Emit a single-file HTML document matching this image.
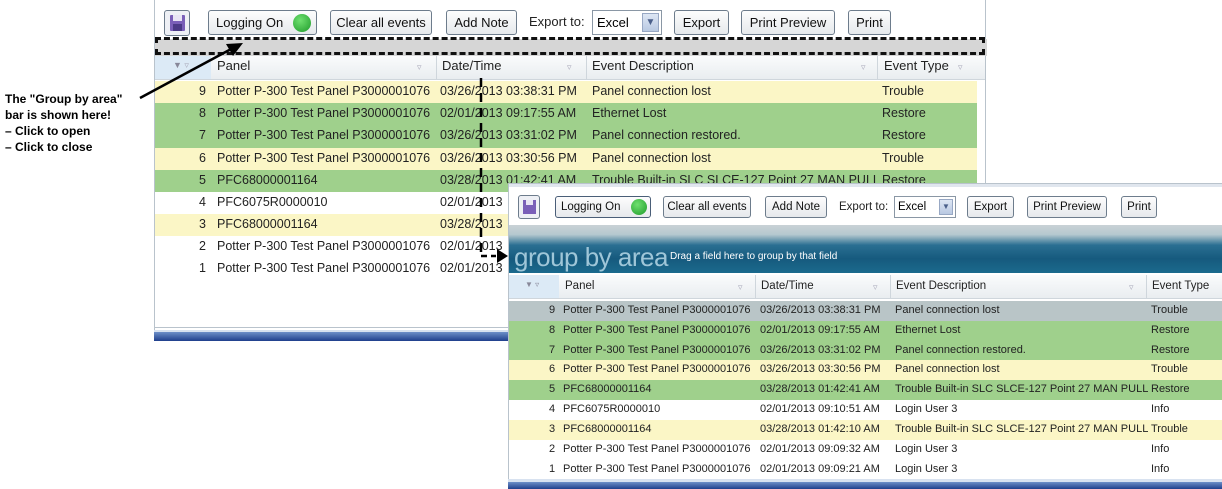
<!DOCTYPE html>
<html><head><style>
*{margin:0;padding:0;box-sizing:border-box}
body{width:1222px;height:489px;background:#fff;position:relative;overflow:hidden;font-family:"Liberation Sans",sans-serif}
.abs{position:absolute}
.win{position:absolute;background:#fff;border:1px solid #b9c3cc}
.btn{position:absolute;border:1px solid #6d7c8c;border-radius:3px;background:linear-gradient(#fdfdfd,#e6e9ec);font-size:12px;color:#111;text-align:center;white-space:nowrap}
.row{position:absolute;left:0;right:0;white-space:nowrap;color:#222}
.row span{position:absolute}
.hdr{position:absolute;left:0;right:0;background:linear-gradient(#fafbfc,#e9edf0);border-bottom:1px solid #cfd6dc;color:#222}
.hdr span{position:absolute}
.y{background:#fbf6c6}.g{background:#9fd08c}.w{background:#fff}
.fil{color:#aab;font-size:9px}
</style></head><body>

<!-- TOP WINDOW -->
<div class="win" style="left:154px;top:-2px;width:832px;height:336px;border-bottom:none">
  <div class="abs" style="left:9px;top:11px;width:26px;height:26px;border:1px solid #6d7c8c;border-radius:3px;background:#eef0f5">
    <div class="abs" style="left:5px;top:4px;width:15px;height:16px;background:#7a5fb8;border-radius:1px"></div>
    <div class="abs" style="left:8px;top:4px;width:9px;height:6px;background:#e8e4f4"></div>
    <div class="abs" style="left:8px;top:13px;width:9px;height:7px;background:#4b3a86"></div>
  </div>
  <div class="btn" style="left:53px;top:11px;width:109px;height:25px;line-height:23px;text-align:left;padding-left:7px;font-size:13px">Logging On
    <div class="abs" style="left:84px;top:3px;width:18px;height:18px;border-radius:50%;background:radial-gradient(circle at 40% 35%,#6fe06f,#1e9a2a)"></div></div>
  <div class="btn" style="left:175px;top:11px;width:102px;height:25px;line-height:23px;font-size:13px">Clear all events</div>
  <div class="btn" style="left:291px;top:11px;width:71px;height:25px;line-height:23px;font-size:13px">Add Note</div>
  <div class="abs" style="left:374px;top:15px;font-size:13px;color:#222">Export to:</div>
  <div class="abs" style="left:437px;top:11px;width:70px;height:25px;border:1px solid #8a97a5;background:#fff;font-size:13px;line-height:23px;padding-left:4px">Excel
    <div class="abs" style="right:2px;top:2px;width:17px;height:19px;background:linear-gradient(#dde6f4,#b9c9e2);border:1px solid #98a8c4;color:#4a5f8a;font-size:10px;line-height:17px;text-align:center">&#9660;</div></div>
  <div class="btn" style="left:519px;top:11px;width:55px;height:25px;line-height:23px;font-size:13px">Export</div>
  <div class="btn" style="left:586px;top:11px;width:94px;height:25px;line-height:23px;font-size:13px">Print Preview</div>
  <div class="btn" style="left:693px;top:11px;width:43px;height:25px;line-height:23px;font-size:13px">Print</div>
  <div class="abs" style="left:0;top:40px;width:832px;height:17px;background:#d6d6d6"></div>
  <div class="hdr" style="top:57px;height:24px;font-size:13px">
    <span style="left:0;width:56px;height:23px;background:#dceaf6"></span>
    <span style="left:18px;top:4px;font-size:9px;color:#889">&#9660; <span class="fil" style="position:static">&#9663;</span></span>
    <span style="left:62px;top:2px">Panel</span><span class="fil" style="left:262px;top:6px">&#9663;</span>
    <span style="left:281px;top:0;width:1px;height:23px;background:#cfd6dc"></span>
    <span style="left:287px;top:2px">Date/Time</span><span class="fil" style="left:412px;top:6px">&#9663;</span>
    <span style="left:431px;top:0;width:1px;height:23px;background:#cfd6dc"></span>
    <span style="left:437px;top:2px">Event Description</span><span class="fil" style="left:706px;top:6px">&#9663;</span>
    <span style="left:722px;top:0;width:1px;height:23px;background:#cfd6dc"></span>
    <span style="left:729px;top:2px">Event Type</span><span class="fil" style="left:803px;top:6px">&#9663;</span>
  </div>
  <div style="position:absolute;left:0;top:82px;width:822px;font-size:12.5px">
    <div class="row y" style="top:0;height:22px"><span style="left:44px;top:3px">9</span><span style="left:62px;top:3px">Potter P-300 Test Panel P3000001076</span><span style="left:285px;top:3px">03/26/2013 03:38:31 PM</span><span style="left:437px;top:3px">Panel connection lost</span><span style="left:727px;top:3px">Trouble</span></div>
    <div class="row g" style="top:22px;height:45px"><span style="left:44px;top:3px">8</span><span style="left:62px;top:3px">Potter P-300 Test Panel P3000001076</span><span style="left:285px;top:3px">02/01/2013 09:17:55 AM</span><span style="left:437px;top:3px">Ethernet Lost</span><span style="left:727px;top:3px">Restore</span>
      <span style="left:44px;top:25px">7</span><span style="left:62px;top:25px">Potter P-300 Test Panel P3000001076</span><span style="left:285px;top:25px">03/26/2013 03:31:02 PM</span><span style="left:437px;top:25px">Panel connection restored.</span><span style="left:727px;top:25px">Restore</span></div>
    <div class="row y" style="top:67px;height:22px"><span style="left:44px;top:3px">6</span><span style="left:62px;top:3px">Potter P-300 Test Panel P3000001076</span><span style="left:285px;top:3px">03/26/2013 03:30:56 PM</span><span style="left:437px;top:3px">Panel connection lost</span><span style="left:727px;top:3px">Trouble</span></div>
    <div class="row g" style="top:89px;height:22px"><span style="left:44px;top:3px">5</span><span style="left:62px;top:3px">PFC68000001164</span><span style="left:285px;top:3px">03/28/2013 01:42:41 AM</span><span style="left:437px;top:3px">Trouble Built-in SLC SLCE-127 Point 27 MAN PULL</span><span style="left:727px;top:3px">Restore</span></div>
    <div class="row w" style="top:111px;height:22px"><span style="left:44px;top:3px">4</span><span style="left:62px;top:3px">PFC6075R0000010</span><span style="left:285px;top:3px">02/01/2013</span></div>
    <div class="row y" style="top:133px;height:22px"><span style="left:44px;top:3px">3</span><span style="left:62px;top:3px">PFC68000001164</span><span style="left:285px;top:3px">03/28/2013</span></div>
    <div class="row w" style="top:155px;height:22px"><span style="left:44px;top:3px">2</span><span style="left:62px;top:3px">Potter P-300 Test Panel P3000001076</span><span style="left:285px;top:3px">02/01/2013</span></div>
    <div class="row w" style="top:177px;height:22px"><span style="left:44px;top:3px">1</span><span style="left:62px;top:3px">Potter P-300 Test Panel P3000001076</span><span style="left:285px;top:3px">02/01/2013</span></div>
  </div>
  <div class="abs" style="left:0;top:328px;width:832px;height:1px;background:#b9c3cc"></div>
</div>
<div class="abs" style="left:154px;top:332px;width:360px;height:9px;background:linear-gradient(#6d8fc8,#1f3f8c)"></div>
<div class="abs" style="left:154px;top:330px;width:360px;height:2px;background:#d8e2f0"></div>

<!-- dashed box -->
<div class="abs" style="left:155px;top:37px;width:830px;height:18px;border:3px dashed #111"></div>

<!-- annotation -->
<div class="abs" style="left:5px;top:91px;font-size:12px;font-weight:bold;line-height:16px;color:#000">The "Group by area"<br>bar is shown here!<br>– Click to open<br>– Click to close</div>
<svg class="abs" style="left:0;top:0" width="1222" height="489">
  <line x1="140" y1="98" x2="233" y2="48" stroke="#000" stroke-width="2.5"/>
  <polygon points="243,43 226,44 233,56" fill="#000"/>
  <line x1="481" y1="78" x2="481" y2="256" stroke="#000" stroke-width="2.5" stroke-dasharray="9,6"/>
  <line x1="481" y1="256" x2="496" y2="256" stroke="#000" stroke-width="2.5" stroke-dasharray="6,4"/>
  <polygon points="508,256 497,249 497,263" fill="#000"/>
</svg>

<!-- BOTTOM WINDOW -->
<div class="win" style="left:508px;top:183px;width:716px;height:296px;border-bottom:none;overflow:hidden">
  <div class="abs" style="left:0;top:0;width:716px;height:3px;background:#e0e6ee"></div>
  <div class="abs" style="left:9px;top:11px;width:22px;height:24px;border:1px solid #6d7c8c;border-radius:3px;background:#eef0f5">
    <div class="abs" style="left:4px;top:4px;width:13px;height:14px;background:#7a5fb8"></div>
    <div class="abs" style="left:7px;top:4px;width:7px;height:5px;background:#e8e4f4"></div>
  </div>
  <div class="btn" style="left:46px;top:12px;width:96px;height:22px;line-height:20px;text-align:left;padding-left:5px;font-size:11.5px;border-color:#4a5e78">Logging On
    <div class="abs" style="left:75px;top:2px;width:16px;height:16px;border-radius:50%;background:radial-gradient(circle at 40% 35%,#6fe06f,#1e9a2a)"></div></div>
  <div class="btn" style="left:154px;top:12px;width:88px;height:22px;line-height:20px;font-size:11.5px">Clear all events</div>
  <div class="btn" style="left:256px;top:12px;width:62px;height:22px;line-height:20px;font-size:11.5px">Add Note</div>
  <div class="abs" style="left:330px;top:17px;font-size:11.5px;color:#222">Export to:</div>
  <div class="abs" style="left:385px;top:12px;width:62px;height:22px;border:1px solid #8a97a5;background:#fff;font-size:11.5px;line-height:20px;padding-left:3px">Excel
    <div class="abs" style="right:2px;top:2px;width:14px;height:16px;background:linear-gradient(#dde6f4,#b9c9e2);border:1px solid #98a8c4;color:#4a5f8a;font-size:8px;line-height:14px;text-align:center">&#9660;</div></div>
  <div class="btn" style="left:458px;top:12px;width:47px;height:22px;line-height:20px;font-size:11.5px">Export</div>
  <div class="btn" style="left:518px;top:12px;width:80px;height:22px;line-height:20px;font-size:11.5px">Print Preview</div>
  <div class="btn" style="left:612px;top:12px;width:36px;height:22px;line-height:20px;font-size:11.5px">Print</div>
  <div class="abs" style="left:0;top:41px;width:716px;height:48px;background:linear-gradient(#c9d2d6 0,#b5c8cf 20%,#2a6f92 42%,#165a7e 70%,#1b6a8d 100%)"></div>
  <div class="abs" style="left:5px;top:58px;font-size:26px;color:#9fc6d8;letter-spacing:-0.5px">group by area</div>
  <div class="abs" style="left:161px;top:67px;font-size:10px;color:#fff">Drag a field here to group by that field</div>
  <div class="hdr" style="top:91px;height:24px;font-size:11.5px">
    <span style="left:0;width:50px;height:23px;background:#dceaf6"></span>
    <span style="left:16px;top:5px;font-size:8px;color:#889">&#9660; &#9663;</span>
    <span style="left:56px;top:5px">Panel</span><span class="fil" style="left:229px;top:7px">&#9663;</span>
    <span style="left:246px;top:0;width:1px;height:23px;background:#cfd6dc"></span>
    <span style="left:252px;top:5px">Date/Time</span><span class="fil" style="left:364px;top:7px">&#9663;</span>
    <span style="left:381px;top:0;width:1px;height:23px;background:#cfd6dc"></span>
    <span style="left:387px;top:5px">Event Description</span><span class="fil" style="left:620px;top:7px">&#9663;</span>
    <span style="left:637px;top:0;width:1px;height:23px;background:#cfd6dc"></span>
    <span style="left:643px;top:5px">Event Type</span>
  </div>
  <div style="position:absolute;left:0;top:117px;width:716px;font-size:11px">
    <div class="row" style="top:0;height:20px;background:#b9c5c7"><span style="left:40px;top:3px">9</span><span style="left:54px;top:3px">Potter P-300 Test Panel P3000001076</span><span style="left:251px;top:3px">03/26/2013 03:38:31 PM</span><span style="left:386px;top:3px">Panel connection lost</span><span style="left:642px;top:3px">Trouble</span></div>
    <div class="row g" style="top:20px;height:39px"><span style="left:40px;top:3px">8</span><span style="left:54px;top:3px">Potter P-300 Test Panel P3000001076</span><span style="left:251px;top:3px">02/01/2013 09:17:55 AM</span><span style="left:386px;top:3px">Ethernet Lost</span><span style="left:642px;top:3px">Restore</span>
      <span style="left:40px;top:23px">7</span><span style="left:54px;top:23px">Potter P-300 Test Panel P3000001076</span><span style="left:251px;top:23px">03/26/2013 03:31:02 PM</span><span style="left:386px;top:23px">Panel connection restored.</span><span style="left:642px;top:23px">Restore</span></div>
    <div class="row y" style="top:59px;height:20px"><span style="left:40px;top:3px">6</span><span style="left:54px;top:3px">Potter P-300 Test Panel P3000001076</span><span style="left:251px;top:3px">03/26/2013 03:30:56 PM</span><span style="left:386px;top:3px">Panel connection lost</span><span style="left:642px;top:3px">Trouble</span></div>
    <div class="row g" style="top:79px;height:20px"><span style="left:40px;top:3px">5</span><span style="left:54px;top:3px">PFC68000001164</span><span style="left:251px;top:3px">03/28/2013 01:42:41 AM</span><span style="left:386px;top:3px">Trouble Built-in SLC SLCE-127 Point 27 MAN PULL</span><span style="left:642px;top:3px">Restore</span></div>
    <div class="row w" style="top:99px;height:20px"><span style="left:40px;top:3px">4</span><span style="left:54px;top:3px">PFC6075R0000010</span><span style="left:251px;top:3px">02/01/2013 09:10:51 AM</span><span style="left:386px;top:3px">Login User 3</span><span style="left:642px;top:3px">Info</span></div>
    <div class="row y" style="top:119px;height:20px"><span style="left:40px;top:3px">3</span><span style="left:54px;top:3px">PFC68000001164</span><span style="left:251px;top:3px">03/28/2013 01:42:10 AM</span><span style="left:386px;top:3px">Trouble Built-in SLC SLCE-127 Point 27 MAN PULL</span><span style="left:642px;top:3px">Trouble</span></div>
    <div class="row w" style="top:139px;height:20px"><span style="left:40px;top:3px">2</span><span style="left:54px;top:3px">Potter P-300 Test Panel P3000001076</span><span style="left:251px;top:3px">02/01/2013 09:09:32 AM</span><span style="left:386px;top:3px">Login User 3</span><span style="left:642px;top:3px">Info</span></div>
    <div class="row w" style="top:159px;height:20px"><span style="left:40px;top:3px">1</span><span style="left:54px;top:3px">Potter P-300 Test Panel P3000001076</span><span style="left:251px;top:3px">02/01/2013 09:09:21 AM</span><span style="left:386px;top:3px">Login User 3</span><span style="left:642px;top:3px">Info</span></div>
  </div>
</div>
<div class="abs" style="left:508px;top:479px;width:714px;height:3px;background:#d8e2f0"></div>
<div class="abs" style="left:508px;top:482px;width:714px;height:7px;background:linear-gradient(#6d8fc8,#1f3f8c)"></div>
</body></html>
